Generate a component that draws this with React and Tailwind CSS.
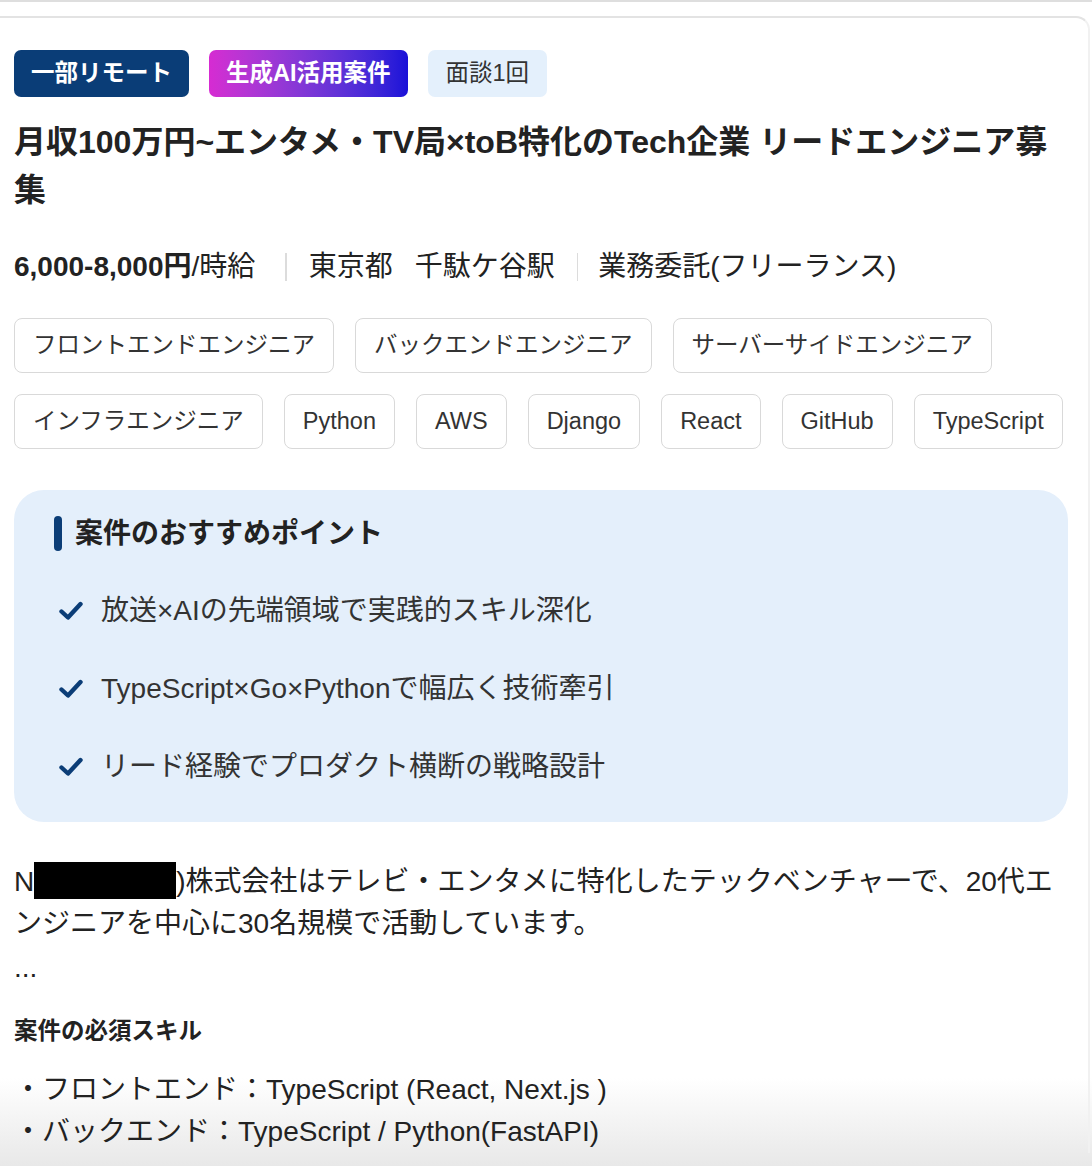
const tagsRow = [
  "フロントエンドエンジニア",
  "バックエンドエンジニア",
  "サーバーサイドエンジニア",
  "インフラエンジニア",
  "Python",
  "AWS",
  "Django",
  "React",
  "GitHub",
  "TypeScript",
];

const points = [
  "放送×AIの先端領域で実践的スキル深化",
  "TypeScript×Go×Pythonで幅広く技術牽引",
  "リード経験でプロダクト横断の戦略設計",
];

function Check() {
  return (
    <svg viewBox="0 0 24 20" className="w-[24px] h-[20px] shrink-0" fill="none">
      <path d="M2.5 10.5 L9 16.5 L21.5 3" stroke="#0b3d77" strokeWidth="4.4" strokeLinecap="round" strokeLinejoin="round" />
    </svg>
  );
}

export default function App() {
  return (
    <div className="relative h-[1166px] overflow-hidden bg-white font-['Liberation_Sans','Noto_Sans_CJK_JP',sans-serif] text-[#222]">
      {/* bottom fade, sits behind the text */}
      <div className="pointer-events-none absolute inset-x-0 bottom-0 h-[88px] bg-linear-to-b from-white/0 to-[#e8e8e8]" />

      {/* top rule */}
      <div className="relative h-[2px] bg-[#dedede]" />

      <div className="relative z-10 mt-[14px] mr-[2px] border-t-2 border-r-2 border-t-[#e3e3e3] border-r-[#f1f1f1] rounded-tr-[14px] pt-[32px] pl-[14px] pr-[20px]">
        {/* badges */}
        <div className="flex gap-[20px]">
          <span className="h-[47px] flex items-center px-[17px] rounded-[7px] bg-[#0a3d77] text-white text-[23.5px] font-bold">
            一部リモート
          </span>
          <span className="h-[47px] flex items-center px-[17px] rounded-[7px] bg-linear-to-r from-[#d62bd2] to-[#1a10d8] text-white text-[23.5px] font-bold">
            生成AI活用案件
          </span>
          <span className="h-[47px] flex items-center px-[18px] rounded-[7px] bg-[#e4f0fc] text-[#333] text-[23.5px]">
            面談1回
          </span>
        </div>

        {/* title */}
        <h1 className="mt-[21px] text-[32px] font-bold leading-[48px] text-[#222]">
          月収100万円~エンタメ・TV局×toB特化のTech企業 リードエンジニア募集
        </h1>

        {/* salary row */}
        <div className="mt-[33px] h-[40px] flex items-center text-[28px] text-[#222]">
          <span>
            <span className="font-bold">6,000-8,000円</span>/時給
          </span>
          <span className="ml-[30px] mr-[22px] w-[1.5px] h-[28px] bg-[#dcdcdc]" />
          <span>東京都</span>
          <span className="ml-[22px]">千駄ケ谷駅</span>
          <span className="ml-[22px] mr-[20px] w-[1.5px] h-[28px] bg-[#dcdcdc]" />
          <span>業務委託(フリーランス)</span>
        </div>

        {/* tags */}
        <div className="mt-[31px] flex flex-wrap gap-[21px]">
          {tagsRow.map((t) => (
            <span
              key={t}
              className="h-[55px] flex items-center px-[18px] border-[1.5px] border-[#d9d9d9] rounded-[8px] text-[23.5px] text-[#333]"
            >
              {t}
            </span>
          ))}
        </div>

        {/* recommend box */}
        <div className="mt-[41px] bg-[#e4effb] rounded-[30px] pl-[40px] pt-[26px] pb-[34px]">
          <div className="flex items-center h-[35px]">
            <span className="w-[8px] h-[35px] rounded-full bg-[#0b3d77] mr-[13px]" />
            <span className="text-[28px] font-bold text-[#222]">案件のおすすめポイント</span>
          </div>
          <div className="mt-[39px] flex flex-col gap-[36px]">
            {points.map((p) => (
              <div key={p} className="flex items-center h-[42px]">
                <span className="ml-[5px] mr-[18px] flex">
                  <Check />
                </span>
                <span className="text-[28px] text-[#333]">{p}</span>
              </div>
            ))}
          </div>
        </div>

        {/* description */}
        <p className="mt-[39px] text-[28px] leading-[42px] text-[#222]">
          N
          <span className="inline-block align-middle relative -top-[3px] w-[142px] h-[37px] bg-black" />
          )株式会社はテレビ・エンタメに特化したテックベンチャーで、20代エンジニアを中心に30名規模で活動しています。
        </p>
        <p className="text-[28px] leading-[46px] text-[#222]">...</p>

        <h2 className="mt-[22px] text-[23.5px] leading-[36px] font-bold text-[#222]">案件の必須スキル</h2>

        <div className="mt-[20px] text-[28px] leading-[42px] text-[#222]">
          <p>・フロントエンド：TypeScript (React, Next.js )</p>
          <p>・バックエンド：TypeScript / Python(FastAPI)</p>
        </div>
      </div>
    </div>
  );
}
